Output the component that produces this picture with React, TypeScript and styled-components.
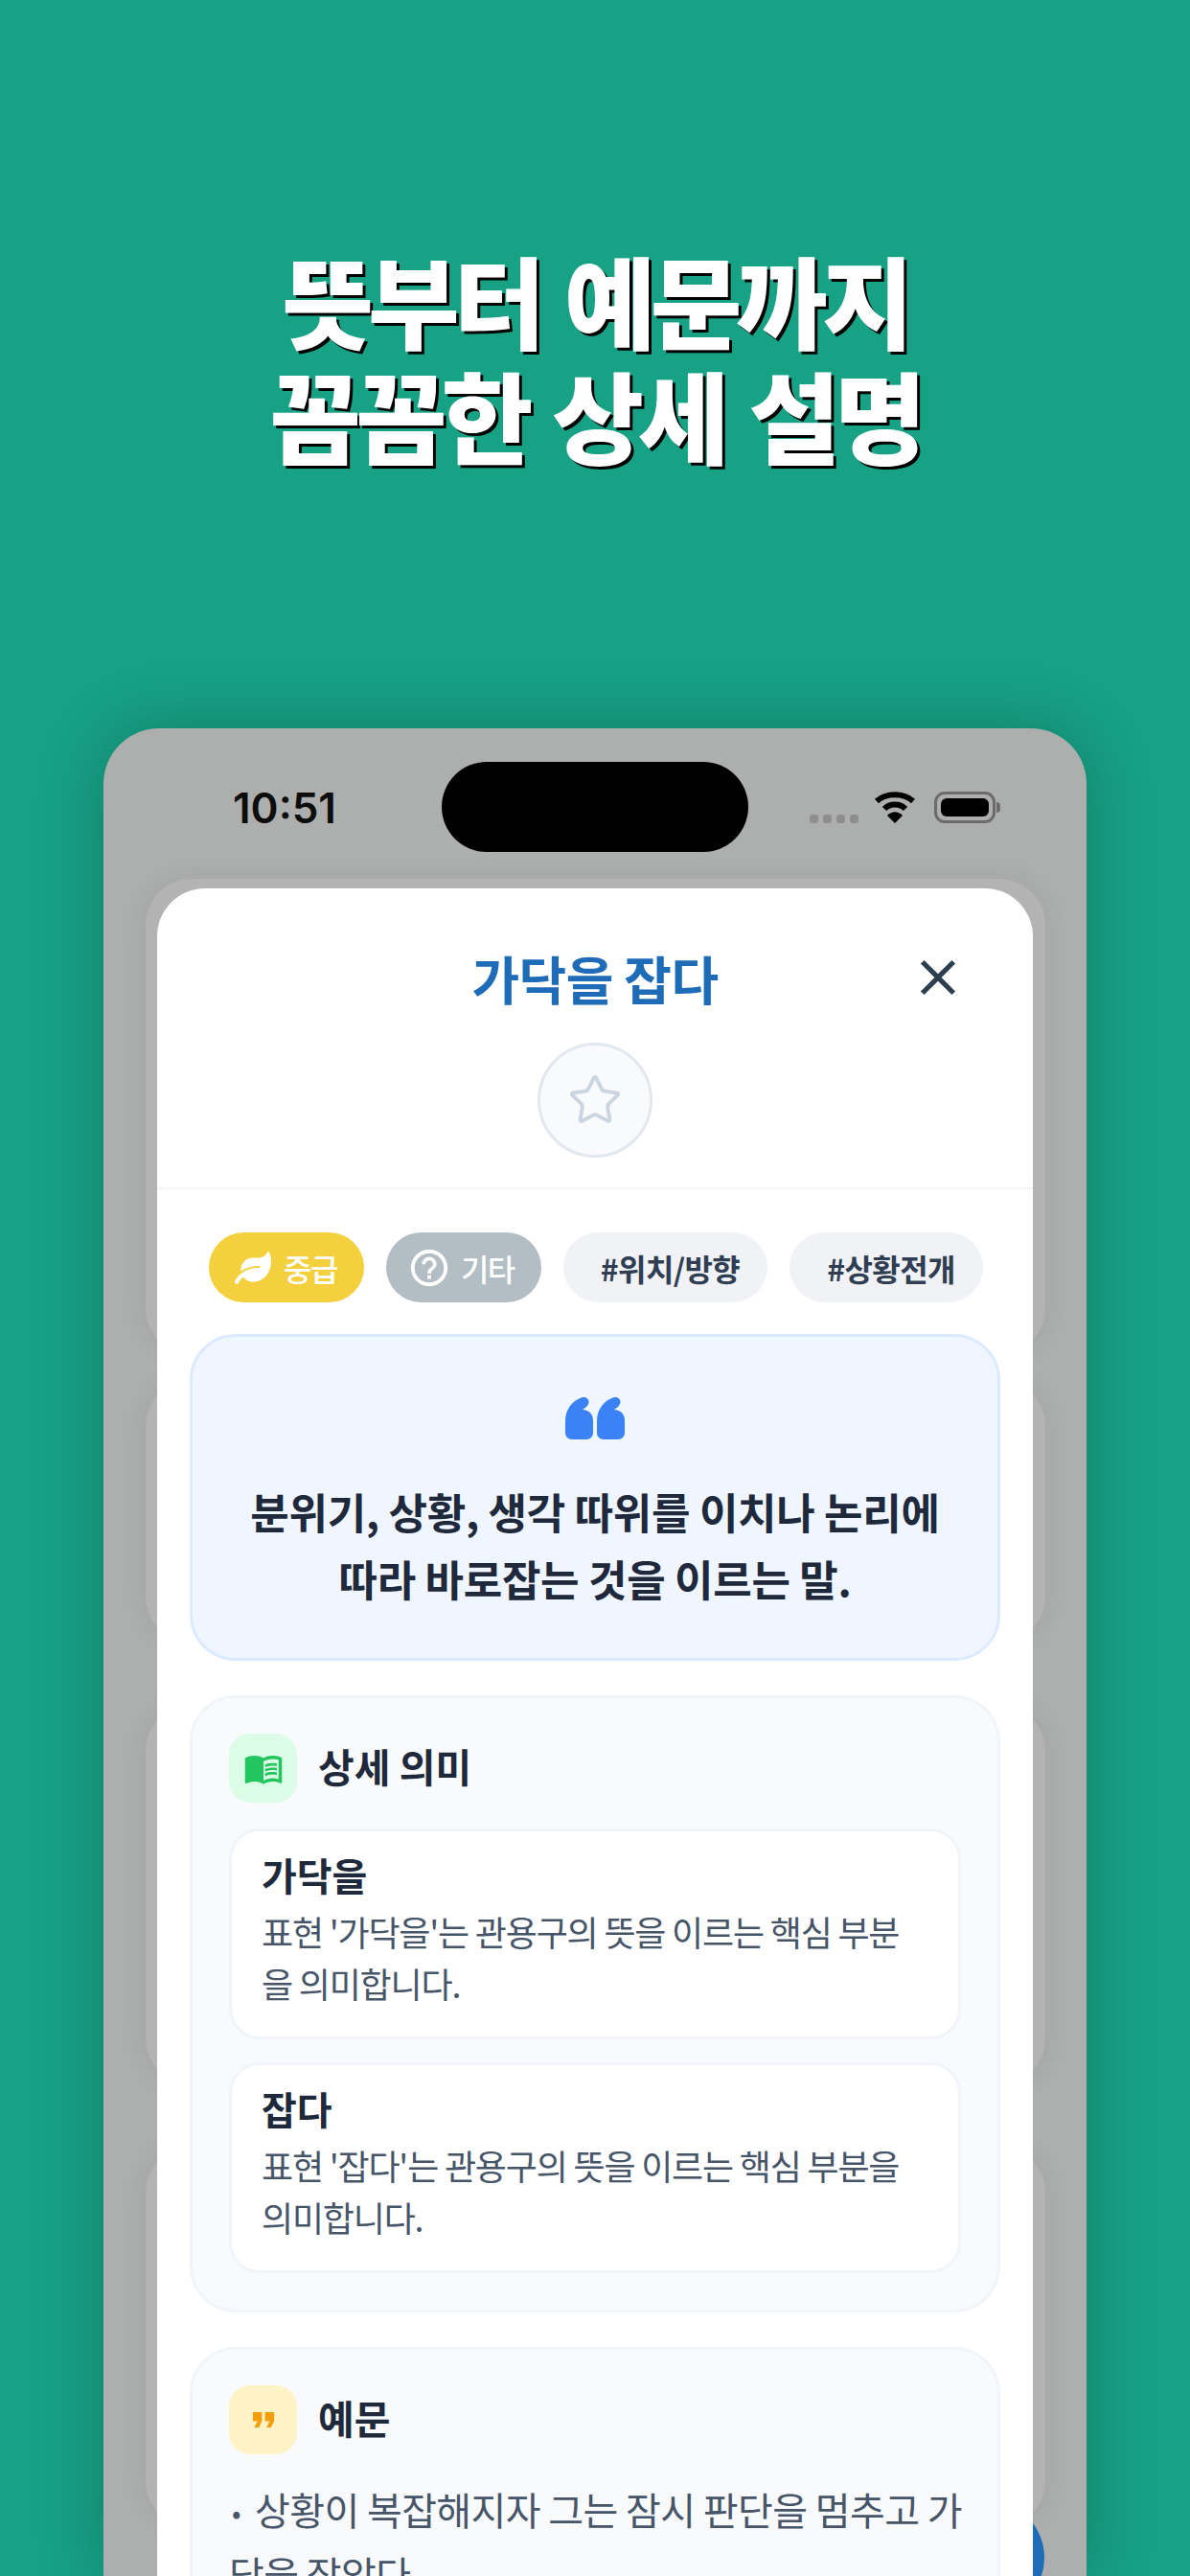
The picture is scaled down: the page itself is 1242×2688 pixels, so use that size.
import styled, {createGlobalStyle} from 'styled-components'
import {FaLeaf} from 'react-icons/fa'
import {MdClose, MdFormatQuote, MdHelpOutline, MdMenuBook} from 'react-icons/md'
import {Star} from 'lucide-react'

const GlobalStyle = createGlobalStyle`
    html, body {
        margin: 0;
        width: 1242px;
        height: 2688px;
        overflow: hidden;
        background: #17a185;
    }
    * {
        box-sizing: border-box;
    }
    body {
        font-family: "Noto Sans CJK KR", "Noto Sans", sans-serif;
    }
`

const Page = styled.div`
    width: 1242px;
    height: 2688px;
    display: flex;
    flex-direction: column;
    align-items: center;
    overflow: hidden;
    background: #17a185;
`
const Headline = styled.h1`
    margin: 0;
    height: 760px;
    padding-top: 252px;
    font-size: 104px;
    line-height: 120px;
    font-weight: 900;
    letter-spacing: -6px;
    word-spacing: 8px;
    text-align: center;
    color: #fff;
    text-shadow: 3px 3px 0 #000;
`
const Phone = styled.div`
    position: relative;
    flex: 1;
    width: 1026px;
    border-radius: 58px 58px 0 0;
    background: #adaeae;
    box-shadow: 0 0 70px rgba(0, 0, 0, 0.22);
    overflow: hidden;
`
const StatusBar = styled.div`
    height: 157px;
    padding: 35px 90px 0 135px;
    display: flex;
    align-items: flex-start;
`
const Time = styled.span`
    width: 218px;
    margin-top: 19px;
    font-family: Inter, sans-serif;
    font-size: 44px;
    line-height: 58px;
    font-weight: 600;
    color: #0d0d0d;
`
const Island = styled.div`
    width: 320px;
    height: 94px;
    border-radius: 47px;
    background: #000;
`
const StatusIcons = styled.div`
    flex: 1;
    height: 94px;
    display: flex;
    align-items: center;
    justify-content: flex-end;
    gap: 19px;
`
const Dots = styled.div`
    display: flex;
    gap: 5px;
    margin-top: 24px;
    margin-right: -3px;
    span {
        width: 9px;
        height: 9px;
        border-radius: 3px;
        background: #8e8e8e;
    }
`
const Battery = styled.div`
    position: relative;
    width: 64px;
    height: 33px;
    padding: 4px;
    border: 3px solid #6b6b6b;
    border-radius: 11px;
    margin-right: 5px;
    &::before {
        content: '';
        display: block;
        height: 100%;
        border-radius: 6px;
        background: #000;
    }
    &::after {
        content: '';
        position: absolute;
        right: -8px;
        top: 8px;
        width: 4px;
        height: 11px;
        border-radius: 0 4px 4px 0;
        background: #6b6b6b;
    }
`
const Backdrop = styled.div`
    padding: 0 43px 0 44px;
    display: flex;
    flex-direction: column;
    gap: 65px;
`
const BackdropPanel = styled.div<{$h: number; $top?: number}>`
    height: ${({$h}) => $h}px;
    margin-top: ${({$top}) => $top ?? 0}px;
    border-radius: 48px;
    background: #b3b3b3;
    box-shadow: 0 0 28px rgba(0, 0, 0, 0.07);
`
const Fab = styled.div`
    position: absolute;
    right: 44px;
    top: 1849px;
    width: 120px;
    height: 120px;
    border-radius: 50%;
    background: #1e6bb8;
`
const Sheet = styled.div`
    position: absolute;
    top: 167px;
    left: 56px;
    width: 914px;
    height: 1800px;
    border-radius: 50px 50px 0 0;
    background: #fff;
`
const SheetHeader = styled.div`
    position: relative;
    height: 314px;
    padding-top: 61px;
    display: flex;
    flex-direction: column;
    align-items: center;
    border-bottom: 2px solid #f1f5f9;
`
const Title = styled.h2`
    margin: 0;
    font-size: 54px;
    line-height: 65px;
    font-weight: 700;
    letter-spacing: -0.6px;
    color: #1e6bb8;
`
const CloseBtn = styled.div`
    position: absolute;
    top: 62px;
    right: 68px;
    display: flex;
    color: #2c3e50;
`
const StarBtn = styled.div`
    width: 120px;
    height: 120px;
    margin-top: 35px;
    display: flex;
    align-items: center;
    justify-content: center;
    border-radius: 50%;
    border: 3px solid #e2e8f0;
    background: #f8fafc;
    color: #cbd5e1;
`
const Tags = styled.div`
    padding: 45px 0 33px 54px;
    display: flex;
    gap: 23px;
`
const Tag = styled.div<{$bg: string; $color: string; $weight: number; $left: number; $gap: number; $right: number; $track: number}>`
    height: 73px;
    padding: 0 ${({$right}) => $right}px 0 ${({$left}) => $left}px;
    display: flex;
    align-items: center;
    gap: ${({$gap}) => $gap}px;
    border-radius: 37px;
    font-size: 32px;
    letter-spacing: ${({$track}) => $track}px;
    font-weight: ${({$weight}) => $weight};
    background: ${({$bg}) => $bg};
    color: ${({$color}) => $color};
`
const Body = styled.div`
    padding: 0 34px;
    display: flex;
    flex-direction: column;
    gap: 36px;
`
const QuoteBox = styled.div`
    height: 341px;
    padding-top: 63px;
    display: flex;
    flex-direction: column;
    align-items: center;
    border: 3px solid #dbeafe;
    border-radius: 48px;
    background: #eff6ff;
`
const QuoteText = styled.p`
    margin: 40px 0 0;
    font-size: 44px;
    line-height: 70px;
    font-weight: 700;
    letter-spacing: -0.3px;
    text-align: center;
    color: #1e293b;
`
const Section = styled.div`
    padding: 37px 38px 38px;
    border: 3px solid #f1f5f9;
    border-radius: 48px;
    background: #f8fafc;
`
const SectionHead = styled.div`
    display: flex;
    align-items: center;
    gap: 22px;
`
const IconBox = styled.div<{$bg: string; $color: string}>`
    width: 71px;
    height: 72px;
    display: flex;
    align-items: center;
    justify-content: center;
    border-radius: 22px;
    background: ${({$bg}) => $bg};
    color: ${({$color}) => $color};
`
const SectionTitle = styled.h3`
    margin: -6px 0 0;
    font-size: 41px;
    font-weight: 700;
    color: #1e293b;
`
const Items = styled.div`
    margin-top: 27px;
    display: flex;
    flex-direction: column;
    gap: 24px;
`
const Item = styled.div`
    height: 220px;
    padding: 19px 30px 0 31px;
    border: 3px solid #f1f5f9;
    border-radius: 32px;
    background: #fff;
`
const ItemTitle = styled.div`
    font-size: 40px;
    line-height: 52px;
    font-weight: 700;
    color: #1e293b;
`
const ItemDesc = styled.p`
    margin: 6px 0 0;
    font-size: 36px;
    line-height: 54px;
    letter-spacing: -1.2px;
    color: #475569;
`
const Example = styled.p`
    margin: 25px -8px 0 0;
    font-size: 40px;
    line-height: 64px;
    letter-spacing: -0.6px;
    color: #475569;
`
const Bullet = styled.span`
    display: inline-block;
    width: 27px;
    padding-left: 3px;
    font-size: 28px;
    vertical-align: 2px;
`

const tagList = ['#위치/방향', '#상황전개']

function Wifi() {
    return (
        <svg width="44" height="33" viewBox="0 0 44 33">
            <path d="M3 10 C13 1 31 1 41 10" fill="none" stroke="#000" strokeWidth="6"/>
            <path d="M11 18 C17 12 27 12 33 18" fill="none" stroke="#000" strokeWidth="6"/>
            <path d="M14 25 C19 20 25 20 30 25 L22 33 Z" fill="#000"/>
        </svg>
    )
}

function BigQuote() {
    const mark = 'M0 37 V25 C0 12 8 3 18 0 C22 -1 26 3 24 7 C23 10 20 11 18 13 C25 13 29 18 29 24 V37 C29 41 26 44 22 44 H7 C3 44 0 41 0 37 Z'
    return (
        <svg width="62" height="44" viewBox="0 0 62 44">
            <path d={mark} fill="#3b82f6"/>
            <path d={mark} fill="#3b82f6" transform="translate(33 0)"/>
        </svg>
    )
}

function App() {
    return (
        <Page>
            <GlobalStyle/>
            <Headline>뜻부터 예문까지<br/>꼼꼼한 상세 설명</Headline>
            <Phone>
                <StatusBar>
                    <Time>10:51</Time>
                    <Island/>
                    <StatusIcons>
                        <Dots><span/><span/><span/><span/></Dots>
                        <Wifi/>
                        <Battery/>
                    </StatusIcons>
                </StatusBar>
                <Backdrop>
                    <BackdropPanel $h={496}/>
                    <BackdropPanel $h={274} $top={-38}/>
                    <BackdropPanel $h={396}/>
                    <BackdropPanel $h={397}/>
                </Backdrop>
                <Fab/>
                <Sheet>
                    <SheetHeader>
                        <Title>가닥을 잡다</Title>
                        <CloseBtn><MdClose size={62}/></CloseBtn>
                        <StarBtn><Star size={58} strokeWidth={1.6}/></StarBtn>
                    </SheetHeader>
                    <Tags>
                        <Tag $bg="#f4d03f" $color="#fff" $weight={500} $left={27} $gap={13} $right={28} $track={-1.5}><FaLeaf size={38}/>중급</Tag>
                        <Tag $bg="#b2bec3" $color="#fff" $weight={500} $left={22} $gap={10} $right={28} $track={-1.5}><MdHelpOutline size={46}/>기타</Tag>
                        {tagList.map(t => (
                            <Tag key={t} $bg="#f1f2f6" $color="#2f3e52" $weight={600} $left={39} $gap={0} $right={29} $track={-0.6}>{t}</Tag>
                        ))}
                    </Tags>
                    <Body>
                        <QuoteBox>
                            <BigQuote/>
                            <QuoteText>분위기, 상황, 생각 따위를 이치나 논리에<br/>따라 바로잡는 것을 이르는 말.</QuoteText>
                        </QuoteBox>
                        <Section>
                            <SectionHead>
                                <IconBox $bg="#dcfce7" $color="#22c55e"><MdMenuBook size={42}/></IconBox>
                                <SectionTitle>상세 의미</SectionTitle>
                            </SectionHead>
                            <Items>
                                <Item>
                                    <ItemTitle>가닥을</ItemTitle>
                                    <ItemDesc>표현 '가닥을'는 관용구의 뜻을 이르는 핵심 부분을 의미합니다.</ItemDesc>
                                </Item>
                                <Item>
                                    <ItemTitle>잡다</ItemTitle>
                                    <ItemDesc>표현 '잡다'는 관용구의 뜻을 이르는 핵심 부분을 의미합니다.</ItemDesc>
                                </Item>
                            </Items>
                        </Section>
                        <Section>
                            <SectionHead>
                                <IconBox $bg="#fef3c7" $color="#f59e0b"><MdFormatQuote size={38}/></IconBox>
                                <SectionTitle>예문</SectionTitle>
                            </SectionHead>
                            <Example><Bullet>•</Bullet>상황이 복잡해지자 그는 잠시 판단을 멈추고 가닥을 잡았다.</Example>
                        </Section>
                    </Body>
                </Sheet>
            </Phone>
        </Page>
    )
}

export default App
